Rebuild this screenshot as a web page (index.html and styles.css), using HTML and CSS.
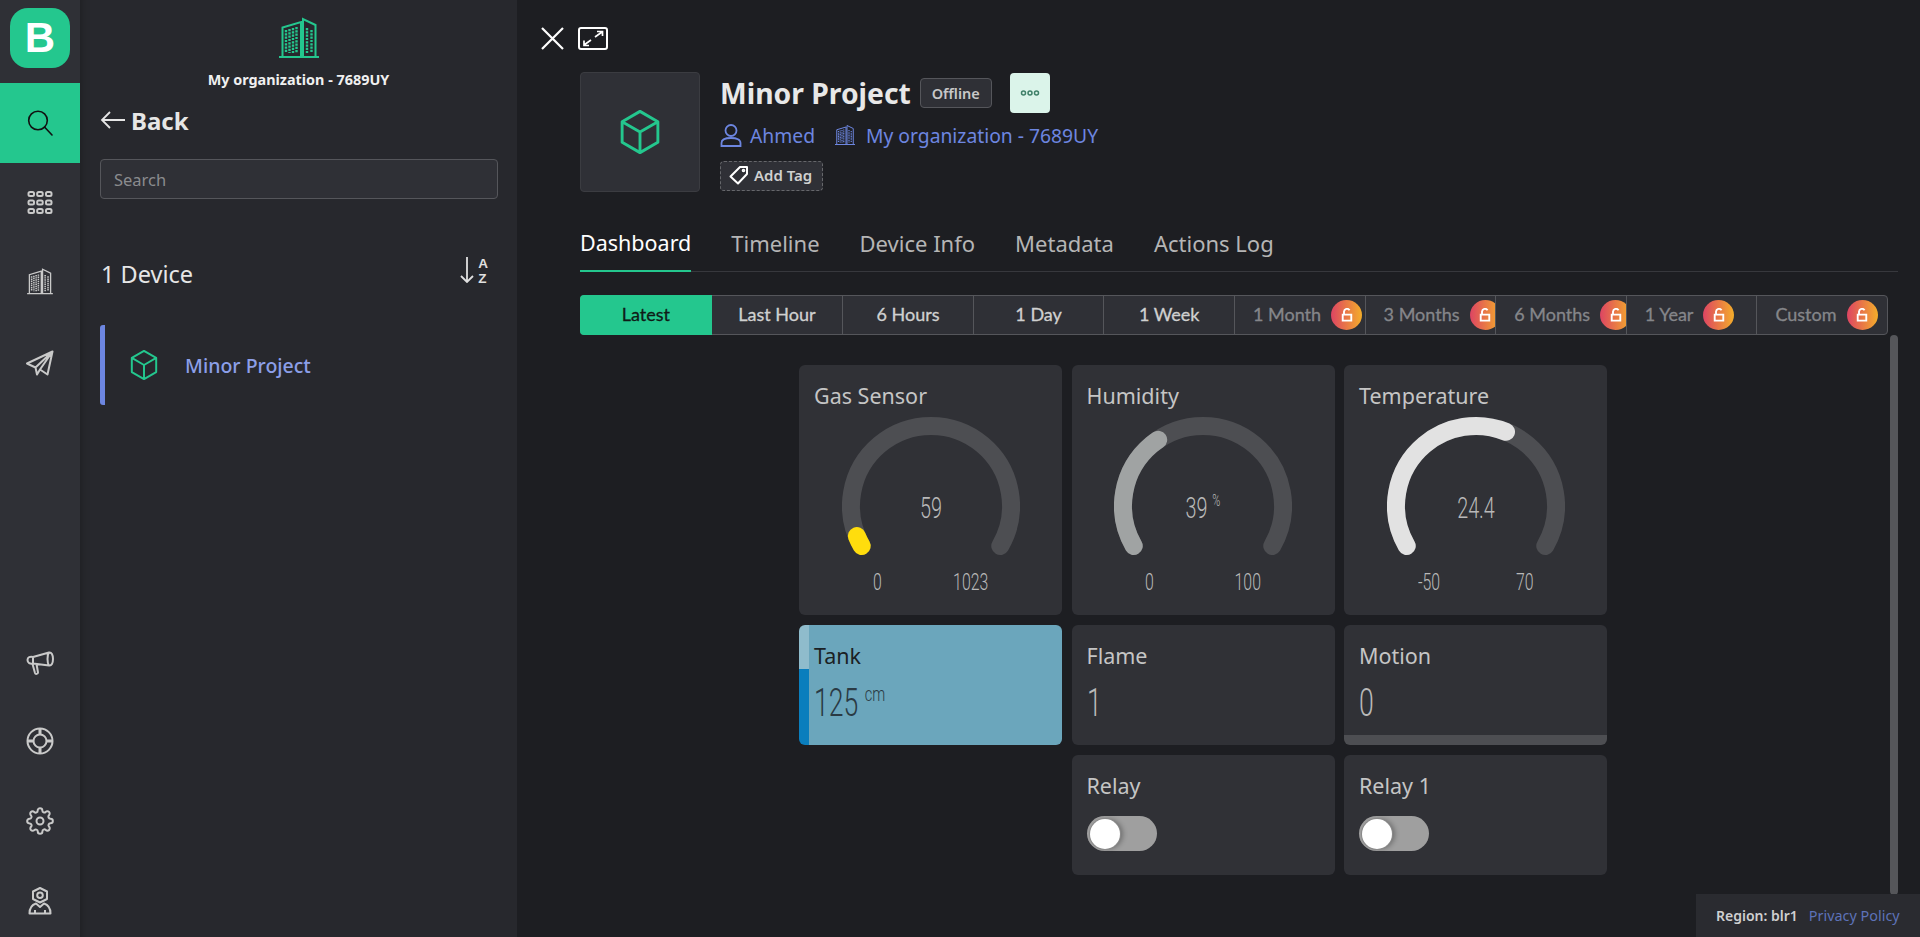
FILE: index.html
```html
<!DOCTYPE html>
<html lang="en">
<head>
    <meta charset="UTF-8">
    <meta name="viewport" content="width=device-width, initial-scale=1.0">
    <title>Minor Project - Dashboard</title>
    <link rel="stylesheet" href="styles.css">
</head>
<body>
    <svg class="sprite" width="0" height="0">
        <symbol id="i-building" viewBox="0 0 40 42">
            <g fill="none" stroke="currentColor" stroke-width="2">
                <path d="M0 40H40M3.500 40V10.500L22 5V40M24 40V2L36.500 8V40" />
                <path d="M7 13V36M10.500 12V36M14 11V36M17.500 10V36" stroke-width="2.400" stroke-dasharray="2.200 1.100" />
                <path d="M28 11V36M32.500 13V36" stroke-width="2.400" stroke-dasharray="2.200 1.100" />
            </g>
        </symbol>
        <symbol id="i-cube" viewBox="0 0 28 32">
            <path d="M14 1L27 8.500V23.500L14 31L1 23.500V8.500ZM1 8.500L14 16L27 8.500M14 16V31" fill="none" stroke="currentColor" stroke-width="2.100" stroke-linejoin="round" />
        </symbol>
        <symbol id="i-lock" viewBox="0 0 14 16">
            <path d="M3.500 7V4A3.500 3.500 0 0 1 10 2.500M2 7.500H12V14.500H2Z" fill="none" stroke="#fff" stroke-width="2.200" />
        </symbol>
    </svg>

    <nav class="rail">
        <div class="rail-top">
            <div class="logo-wrap"><div class="logo">B</div></div>
            <a class="rail-item active">
                <svg width="26" height="26" viewBox="0 0 26 26" fill="none" stroke="#111" stroke-width="1.600" stroke-linecap="round"><circle cx="11" cy="10.500" r="9.300" /><path d="M17.500 17L25 25" /></svg>
            </a>
            <a class="rail-item">
                <svg width="26" height="26" viewBox="0 0 26 26" fill="none" stroke="currentColor" stroke-width="2">
                    <rect x="1.500" y="2" width="5.500" height="4" rx="1.500" /><rect x="10.200" y="2" width="5.500" height="4" rx="1.500" /><rect x="19" y="2" width="5.500" height="4" rx="1.500" />
                    <rect x="1.500" y="10.500" width="5.500" height="4" rx="1.500" /><rect x="10.200" y="10.500" width="5.500" height="4" rx="1.500" /><rect x="19" y="10.500" width="5.500" height="4" rx="1.500" />
                    <rect x="1.500" y="19" width="5.500" height="4" rx="1.500" /><rect x="10.200" y="19" width="5.500" height="4" rx="1.500" /><rect x="19" y="19" width="5.500" height="4" rx="1.500" />
                </svg>
            </a>
            <a class="rail-item"><svg class="rail-building" width="26" height="27"><use href="#i-building" /></svg></a>
            <a class="rail-item">
                <svg width="28" height="26" viewBox="0 0 28 26" fill="none" stroke="currentColor" stroke-width="2" stroke-linejoin="round"><path d="M1 13.500L26.500 1.500L21.500 24.500L14 19.500L11 24.500L9.500 17.500ZM9.500 17.500L26.500 1.500L14 19.500" /></svg>
            </a>
        </div>
        <div class="rail-bottom">
            <a class="rail-item small">
                <svg class="horn" width="28" height="26" viewBox="0 0 28 26" fill="none" stroke="currentColor" stroke-width="2" stroke-linejoin="round"><path d="M7 7L23 2.500C25.500 2 27 5 27 9S25.500 16 23 15.500L7 13.500C4 14 1.500 13 1.500 10S4 6.500 7 7ZM7 7V13.500M23 2.500C21 5 21 13 23 15.500M6.500 14L9 23C9.500 24.500 12 24 12 22.500L10.500 14" /></svg>
            </a>
            <a class="rail-item small">
                <svg width="28" height="28" viewBox="0 0 28 28" fill="none" stroke="currentColor" stroke-width="2"><circle cx="14" cy="14" r="12.500" /><circle cx="14" cy="14" r="6.500" /><path d="M14 1.500V7.500M14 20.500V26.500M1.500 14H7.500M20.500 14H26.500" stroke-width="3" /></svg>
            </a>
            <a class="rail-item small">
                <svg width="28" height="28" viewBox="0 0 24 24" fill="none" stroke="currentColor" stroke-width="1.700"><circle cx="12" cy="12" r="3" /><path d="M19.400 15a1.650 1.650 0 0 0 .33 1.820l.06.06a2 2 0 0 1 0 2.830 2 2 0 0 1-2.830 0l-.06-.06a1.650 1.650 0 0 0-1.820-.33 1.650 1.650 0 0 0-1 1.510V21a2 2 0 0 1-2 2 2 2 0 0 1-2-2v-.09A1.650 1.650 0 0 0 9 19.400a1.650 1.650 0 0 0-1.820.33l-.06.06a2 2 0 0 1-2.830 0 2 2 0 0 1 0-2.830l.06-.06a1.650 1.650 0 0 0 .33-1.820 1.650 1.650 0 0 0-1.510-1H3a2 2 0 0 1-2-2 2 2 0 0 1 2-2h.09A1.650 1.650 0 0 0 4.600 9a1.650 1.650 0 0 0-.33-1.820l-.06-.06a2 2 0 0 1 0-2.830 2 2 0 0 1 2.830 0l.06.06a1.650 1.650 0 0 0 1.820.33H9a1.650 1.650 0 0 0 1-1.510V3a2 2 0 0 1 2-2 2 2 0 0 1 2 2v.09a1.650 1.650 0 0 0 1 1.510 1.650 1.650 0 0 0 1.820-.33l.06-.06a2 2 0 0 1 2.830 0 2 2 0 0 1 0 2.830l-.06.06a1.650 1.650 0 0 0-.33 1.820V9a1.650 1.650 0 0 0 1.510 1H21a2 2 0 0 1 2 2 2 2 0 0 1-2 2h-.09a1.650 1.650 0 0 0-1.510 1z" /></svg>
            </a>
            <a class="rail-item small">
                <svg width="24" height="28" viewBox="0 0 24 28" fill="none" stroke="currentColor" stroke-width="2" stroke-linejoin="round"><path d="M12 1L19 4.500V12L12 15.500L5 12V4.500Z" /><circle cx="12" cy="8.200" r="2.800" /><path d="M1.500 26.500C1.500 20.500 5 17.500 8 16.500L12 20L16 16.500C19 17.500 22.500 20.500 22.500 26.500ZM7 26V23M17 26V23" /></svg>
            </a>
        </div>
    </nav>

    <aside class="panel">
        <div class="org">
            <svg class="org-icon" width="40" height="42"><use href="#i-building" /></svg>
            <div class="org-name">My organization - 7689UY</div>
        </div>
        <a class="back">
            <svg width="25" height="20" viewBox="0 0 25 20" fill="none" stroke="currentColor" stroke-width="1.800"><path d="M25 10H2M10 2L2 10L10 18" /></svg>
            Back
        </a>
        <input class="search" type="text" placeholder="Search">
        <div class="count-row">
            <span class="count">1 Device</span>
            <div class="sort">
                <svg width="14" height="27" viewBox="0 0 14 27" fill="none" stroke="currentColor" stroke-width="1.800"><path d="M7 1V26M1 20L7 26L13 20" /></svg>
                <div class="sort-letters"><span>A</span><span>Z</span></div>
            </div>
        </div>
        <a class="device-row">
            <svg class="cube-green" width="28" height="30"><use href="#i-cube" /></svg>
            <span class="device-name">Minor Project</span>
        </a>
    </aside>

    <main class="main">
        <div class="toolbar">
            <svg width="23" height="23" viewBox="0 0 23 23" fill="none" stroke="#fff" stroke-width="2.200"><path d="M1 1L22 22M22 1L1 22" /></svg>
            <svg width="30" height="23" viewBox="0 0 30 23" fill="none" stroke="#fff" stroke-width="2"><rect x="1" y="1" width="28" height="21" rx="2" /><path d="M17 10L24 5M19 4.500H24.500V9M13 13L6 18M6 13.500V18.500H11" stroke-width="1.700" /></svg>
        </div>

        <header class="device-head">
            <div class="thumb"><svg class="cube-green" width="40" height="44"><use href="#i-cube" /></svg></div>
            <div class="device-info">
                <div class="title-row">
                    <h1>Minor Project</h1>
                    <span class="status">Offline</span>
                    <button class="menu-btn">
                        <svg width="20" height="8" viewBox="0 0 20 8" fill="none" stroke="#3f8069" stroke-width="1.500"><circle cx="3.500" cy="4" r="2" /><circle cx="10" cy="4" r="2" /><circle cx="16.500" cy="4" r="2" /></svg>
                    </button>
                </div>
                <div class="meta-row">
                    <svg width="22" height="24" viewBox="0 0 22 24" fill="none" stroke="currentColor" stroke-width="1.800"><circle cx="11" cy="7.500" r="5.500" /><path d="M1.500 23V20C1.500 16.500 5 15 11 15S20.500 16.500 20.500 20V23Z" /></svg>
                    <span class="meta-text">Ahmed</span>
                    <svg class="meta-gap" width="20" height="24"><use href="#i-building" /></svg>
                    <span class="meta-text">My organization - 7689UY</span>
                </div>
                <button class="add-tag">
                    <svg width="20" height="20" viewBox="0 0 20 20" fill="none" stroke="#fff" stroke-width="2" stroke-linejoin="round"><path d="M11 2H18V9L9 18.500L1.500 11.500Z" /><circle cx="14.500" cy="5.500" r=".8" /></svg>
                    Add Tag
                </button>
            </div>
        </header>

        <div class="tabs">
            <a class="tab active">Dashboard</a>
            <a class="tab">Timeline</a>
            <a class="tab">Device Info</a>
            <a class="tab">Metadata</a>
            <a class="tab">Actions Log</a>
        </div>

        <div class="ranges">
            <a class="range active">Latest</a>
            <a class="range">Last Hour</a>
            <a class="range">6 Hours</a>
            <a class="range">1 Day</a>
            <a class="range">1 Week</a>
            <a class="range locked">1 Month <span class="lock"><svg width="12" height="14"><use href="#i-lock" /></svg></span></a>
            <a class="range locked">3 Months <span class="lock"><svg width="12" height="14"><use href="#i-lock" /></svg></span></a>
            <a class="range locked">6 Months <span class="lock"><svg width="12" height="14"><use href="#i-lock" /></svg></span></a>
            <a class="range locked">1 Year <span class="lock"><svg width="12" height="14"><use href="#i-lock" /></svg></span></a>
            <a class="range locked">Custom <span class="lock"><svg width="12" height="14"><use href="#i-lock" /></svg></span></a>
        </div>

        <div class="widgets-wrap">
            <div class="widgets">
                <section class="card gauge-card">
                    <h3>Gas Sensor</h3>
                    <div class="gauge">
                        <svg width="178" height="150" viewBox="0 0 178 150" fill="none" stroke-width="18" stroke-linecap="round">
                            <path class="gauge-track" d="M19.720 130A80 80 0 1 1 158.280 130" />
                            <path d="M19.720 130A80 80 0 1 1 158.280 130" pathLength="240" stroke="#ffdd0d" stroke-dasharray="8 300" />
                        </svg>
                        <span class="gauge-value num">59</span>
                    </div>
                    <div class="gauge-scale"><span class="num">0</span><span class="num to-right">1023</span></div>
                </section>
                <section class="card gauge-card">
                    <h3>Humidity</h3>
                    <div class="gauge">
                        <svg width="178" height="150" viewBox="0 0 178 150" fill="none" stroke-width="18" stroke-linecap="round">
                            <path class="gauge-track" d="M19.720 130A80 80 0 1 1 158.280 130" />
                            <path d="M19.720 130A80 80 0 1 1 158.280 130" pathLength="240" stroke="#a0a3a3" stroke-dasharray="86 300" />
                        </svg>
                        <span class="gauge-value num">39 <sup>%</sup></span>
                    </div>
                    <div class="gauge-scale"><span class="num">0</span><span class="num to-right">100</span></div>
                </section>
                <section class="card gauge-card">
                    <h3>Temperature</h3>
                    <div class="gauge">
                        <svg width="178" height="150" viewBox="0 0 178 150" fill="none" stroke-width="18" stroke-linecap="round">
                            <path class="gauge-track" d="M19.720 130A80 80 0 1 1 158.280 130" />
                            <path d="M19.720 130A80 80 0 1 1 158.280 130" pathLength="240" stroke="#e2e2e2" stroke-dasharray="142 300" />
                        </svg>
                        <span class="gauge-value num">24.4</span>
                    </div>
                    <div class="gauge-scale"><span class="num">-50</span><span class="num to-right">70</span></div>
                </section>

                <section class="card tank">
                    <h3>Tank</h3>
                    <div class="big-value num">125 <sup>cm</sup></div>
                </section>
                <section class="card">
                    <h3>Flame</h3>
                    <div class="big-value num">1</div>
                </section>
                <section class="card motion">
                    <h3>Motion</h3>
                    <div class="big-value num">0</div>
                </section>

                <section class="card relay">
                    <h3>Relay</h3>
                    <div class="toggle"><span class="knob"></span></div>
                </section>
                <section class="card relay">
                    <h3>Relay 1</h3>
                    <div class="toggle"><span class="knob"></span></div>
                </section>
            </div>
        </div>

        <div class="scrollbar"></div>
        <footer class="foot">
            <span class="region">Region: blr1</span>
            <a class="privacy">Privacy Policy</a>
        </footer>
    </main>
</body>
</html>
```

FILE: styles.css
```css
* {
    box-sizing: border-box;
}
body {
    font-family: "Noto Sans", sans-serif;
    background-color: #1d1e22;
    color: #e6e6e6;
    display: flex;
    height: 937px;
    margin: 0;
    overflow: hidden;
}
.sprite {
    position: absolute;
}
h1, h3 {
    margin: 0;
}
button {
    font-family: inherit;
    cursor: pointer;
}

/* left icon rail */
.rail {
    width: 80px;
    flex: none;
    background-color: #2f3036;
    color: #c9c9c9;
    display: flex;
    flex-direction: column;
    justify-content: space-between;
}
.logo-wrap {
    height: 83px;
    padding: 8px 10px 0;
}
.logo {
    width: 60px;
    height: 60px;
    border-radius: 18px;
    background-color: #24c78e;
    color: #fff;
    font-family: "Liberation Sans", sans-serif;
    font-weight: 700;
    font-size: 42px;
    line-height: 60px;
    text-align: center;
}
.rail-item {
    height: 80px;
    display: flex;
    align-items: center;
    justify-content: center;
}
.rail-item.active {
    background-color: #24c78e;
}
.rail-building {
    margin-bottom: 3px;
}
.rail-bottom {
    display: flex;
    flex-direction: column;
    gap: 8px;
}
.rail-item.small {
    height: 72px;
}
.horn {
    margin-top: 4px;
}

/* device list panel */
.panel {
    width: 437px;
    flex: none;
    background-color: #27282d;
    box-shadow: inset 10px 0 10px -10px rgba(0, 0, 0, .3);
    padding: 0 20px;
}
.org {
    height: 100px;
    padding-top: 17px;
    text-align: center;
}
.org-icon {
    color: #24c78e;
    display: block;
    margin: 0 auto;
}
.org-name {
    font-size: 14.400px;
    font-weight: 700;
    line-height: 18px;
    margin-top: 12px;
    color: #f0f0f0;
}
.back {
    display: flex;
    align-items: center;
    gap: 6px;
    height: 40px;
    font-size: 24px;
    font-weight: 700;
}
.search {
    display: block;
    width: 398px;
    height: 40px;
    margin-top: 19px;
    padding: 0 13px;
    font-family: inherit;
    font-size: 16.500px;
    color: #ddd;
    background-color: #2f3036;
    border: 1px solid #55565b;
    border-radius: 4px;
}
.search::placeholder {
    color: #8a8b8e;
}
.count-row {
    display: flex;
    align-items: center;
    justify-content: space-between;
    height: 40px;
    margin-top: 55px;
    padding: 0 9px 0 1px;
}
.count {
    font-size: 23.500px;
}
.sort {
    display: flex;
    gap: 4px;
    color: #e0e0e0;
    margin-top: -6px;
}
.sort-letters {
    display: flex;
    flex-direction: column;
    font-family: "Liberation Sans", sans-serif;
    font-size: 13.500px;
    font-weight: 700;
    line-height: 15.500px;
}
.device-row {
    display: flex;
    align-items: center;
    height: 80px;
    margin-top: 31px;
    padding-left: 25px;
    gap: 27px;
    border-left: 5px solid #6d86e0;
    border-radius: 3px 0 0 3px;
}
.cube-green {
    color: #24c78e;
}
.device-name {
    font-size: 19.500px;
    font-weight: 500;
    color: #8c9fe8;
}

/* main area */
.main {
    flex: 1;
    padding: 27px 22px 0 63px;
    position: relative;
    min-width: 0;
}
.toolbar {
    display: flex;
    gap: 14px;
    margin-left: -39px;
    height: 23px;
}
.device-head {
    display: flex;
    gap: 20px;
    margin-top: 22px;
}
.thumb {
    width: 120px;
    height: 120px;
    display: flex;
    align-items: center;
    justify-content: center;
    background-color: #2f3036;
    border: 1px solid #3b3c41;
    border-radius: 4px;
}
.title-row {
    display: flex;
    align-items: center;
    height: 40px;
    margin-top: 1px;
}
.title-row h1 {
    font-size: 28.300px;
    font-weight: 700;
    color: #e8e8e8;
}
.status {
    margin-left: 9px;
    width: 72px;
    height: 30px;
    line-height: 28px;
    text-align: center;
    font-size: 14.500px;
    font-weight: 600;
    color: #c8c8c8;
    background-color: #2f3036;
    border: 1px solid #55565b;
    border-radius: 4px;
}
.menu-btn {
    margin-left: 18px;
    width: 40px;
    height: 40px;
    padding: 0;
    display: flex;
    align-items: center;
    justify-content: center;
    background-color: #dbf4ea;
    border: none;
    border-radius: 4px;
}
.meta-row {
    display: flex;
    align-items: center;
    height: 24px;
    margin-top: 10px;
    color: #6d86e0;
    gap: 8px;
}
.meta-text {
    font-size: 19.300px;
}
.meta-gap {
    margin-left: 12px;
    margin-right: 3px;
}
.add-tag {
    display: flex;
    align-items: center;
    gap: 5px;
    width: 103px;
    height: 30px;
    margin-top: 14px;
    padding: 0 0 2px 8px;
    font-size: 15px;
    font-weight: 600;
    color: #d0d0d0;
    background-color: #2f3036;
    border: 1px dashed #66676b;
    border-radius: 4px;
}

.tabs {
    display: flex;
    gap: 40px;
    margin-top: 32px;
    height: 48px;
    border-bottom: 1px solid #37383d;
}
.tab {
    height: 48px;
    font-size: 22px;
    line-height: 38px;
    color: #b5b5b5;
}
.tab.active {
    font-size: 21.500px;
    color: #fff;
    border-bottom: 2px solid #24c78e;
}

.ranges {
    display: grid;
    grid-template-columns: repeat(10, 1fr);
    width: 1308px;
    height: 40px;
    margin-top: 23px;
    background-color: #2f3036;
    border: 1px solid #55565b;
    border-radius: 4px;
}
.range {
    min-width: 0;
    overflow: hidden;
    display: flex;
    align-items: center;
    justify-content: center;
    padding-bottom: 2px;
    font-family: Lato, sans-serif;
    font-size: 18px;
    font-weight: 400;
    -webkit-text-stroke: .3px;
    color: #d0d0d0;
    white-space: nowrap;
    border-left: 1px solid #55565b;
}
.range.active {
    margin: -1px 0 -1px -1px;
    background-color: #24c78e;
    color: #0f1a16;
    border-left: none;
    border-radius: 4px 0 0 4px;
}
.range:nth-child(2) {
    border-left: none;
}
.range.locked {
    justify-content: flex-start;
    padding-left: 18px;
    gap: 10px;
    color: #85868a;
}
.lock {
    flex: none;
    width: 31px;
    height: 30px;
    display: flex;
    align-items: center;
    justify-content: center;
    margin-top: 2px;
    border-radius: 50%;
    background: linear-gradient(90deg, #dd4463, #f4ad2a);
}

/* widgets */
.widgets-wrap {
    display: flex;
    justify-content: center;
    padding-right: 72px;
    margin-top: 30px;
}
.widgets {
    display: grid;
    grid-template-columns: repeat(3, 263px);
    grid-template-rows: 250px 120px 120px;
    column-gap: 9.500px;
    row-gap: 10px;
}
.card {
    padding: 15px;
    background-color: #303136;
    border-radius: 6px;
}
.card h3 {
    font-size: 21.500px;
    font-weight: 400;
    line-height: 32px;
    color: #c5c5c5;
}
.relay:nth-of-type(7) {
    grid-column: 2;
}
.num {
    display: inline-block;
    font-family: Roboto, sans-serif;
    font-weight: 300;
    color: #b9b9b9;
    transform: scaleX(.66);
    transform-origin: left center;
    white-space: nowrap;
}
.num sup {
    font-size: .55em;
    vertical-align: .7em;
    line-height: 0;
}
.gauge {
    position: relative;
    width: 178px;
    height: 150px;
    margin: 4px auto 0;
}
.gauge svg {
    display: block;
}
.gauge-track {
    stroke: #4d4e52;
}
.gauge-value {
    position: absolute;
    left: 0;
    right: 0;
    top: 74px;
    font-size: 30px;
    line-height: 36px;
    text-align: center;
    transform-origin: center;
}
.gauge-scale {
    display: flex;
    justify-content: space-between;
    width: 116px;
    margin: 5px auto 0;
    font-size: 24px;
    line-height: 22px;
}
.gauge-scale .num {
    font-size: 24px;
}
.num.to-right {
    transform-origin: right center;
}
.big-value {
    display: block;
    font-size: 38px;
    line-height: 40px;
    margin-top: 11px;
    transform: scaleX(.7);
}
.tank {
    background: linear-gradient(#0a7ebd, #0a7ebd) left bottom / 10px 76px no-repeat,
                linear-gradient(#8fbccc, #8fbccc) left top / 10px 100% no-repeat,
                #6ba6bc;
}
.tank h3 {
    color: #1b1f24;
}
.tank .num {
    color: #2a3a44;
}
.motion {
    background: linear-gradient(#4d4e52, #4d4e52) bottom / 100% 10px no-repeat, #303136;
}
.toggle {
    display: flex;
    align-items: center;
    width: 70px;
    height: 35px;
    margin-top: 14px;
    padding: 0 3px;
    background-color: #9f9f9f;
    border-radius: 18px;
}
.knob {
    width: 30px;
    height: 30px;
    border-radius: 50%;
    background-color: #fff;
    box-shadow: 0 0 0 1px #8a8a8a, 3px 0 5px rgba(0, 0, 0, .3);
}

/* overlays */
.scrollbar {
    position: absolute;
    top: 335px;
    right: 22px;
    width: 8px;
    height: 560px;
    background-color: #55565a;
    border-radius: 4px;
}
.foot {
    position: absolute;
    right: 0;
    bottom: 0;
    width: 224px;
    height: 43px;
    display: flex;
    align-items: center;
    gap: 11px;
    padding-left: 20px;
    font-size: 14px;
    background-color: #2a2b30;
}
.region {
    font-weight: 600;
    color: #d0d0d0;
}
.privacy {
    font-size: 14.400px;
    color: #5d72b8;
}
```
